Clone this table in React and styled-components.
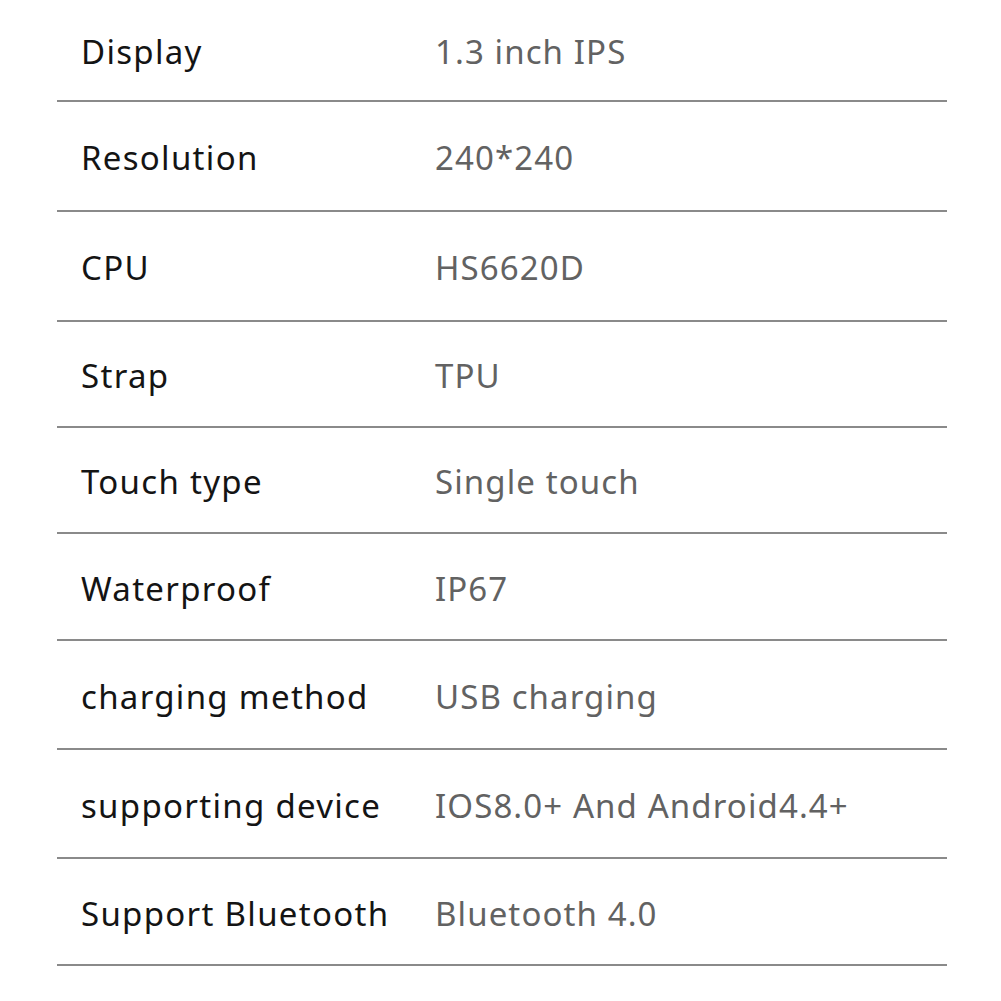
import React from "react";
import styled, { createGlobalStyle } from "styled-components";

const Global = createGlobalStyle`
  html, body { margin: 0; padding: 0; background: #fff; }
  body { font-family: "Noto Sans", "Open Sans", "DejaVu Sans", sans-serif; }
`;

const Table = styled.div`
  width: 890px;
  margin-left: 57px;
  display: flex;
  flex-direction: column;
`;

const Row = styled.div`
  display: grid;
  grid-template-columns: 378px 1fr;
  align-items: center;
  height: ${(p) => p.$h}px;
  border-bottom: 2px solid #8a8a8a;
  box-sizing: content-box;
`;

const Label = styled.div`
  padding-left: 24px;
  padding-top: 3px;
  font-size: 33px;
  letter-spacing: 1.3px;
  color: #141414;
  white-space: nowrap;
`;

const Value = styled.div`
  padding-top: 3px;
  font-size: 33px;
  letter-spacing: 1.1px;
  color: #626262;
  white-space: nowrap;
`;

const rows = [
  ["Display", "1.3 inch IPS", 100],
  ["Resolution", "240*240", 108],
  ["CPU", "HS6620D", 108],
  ["Strap", "TPU", 104],
  ["Touch type", "Single touch", 104],
  ["Waterproof", "IP67", 105],
  ["charging method", "USB charging", 107],
  ["supporting device", "IOS8.0+ And Android4.4+", 107],
  ["Support Bluetooth", "Bluetooth 4.0", 105],
];

export default function App() {
  return (
    <>
      <Global />
      <Table>
        {rows.map(([l, v, h]) => (
          <Row key={l} $h={h}>
            <Label>{l}</Label>
            <Value>{v}</Value>
          </Row>
        ))}
      </Table>
    </>
  );
}
